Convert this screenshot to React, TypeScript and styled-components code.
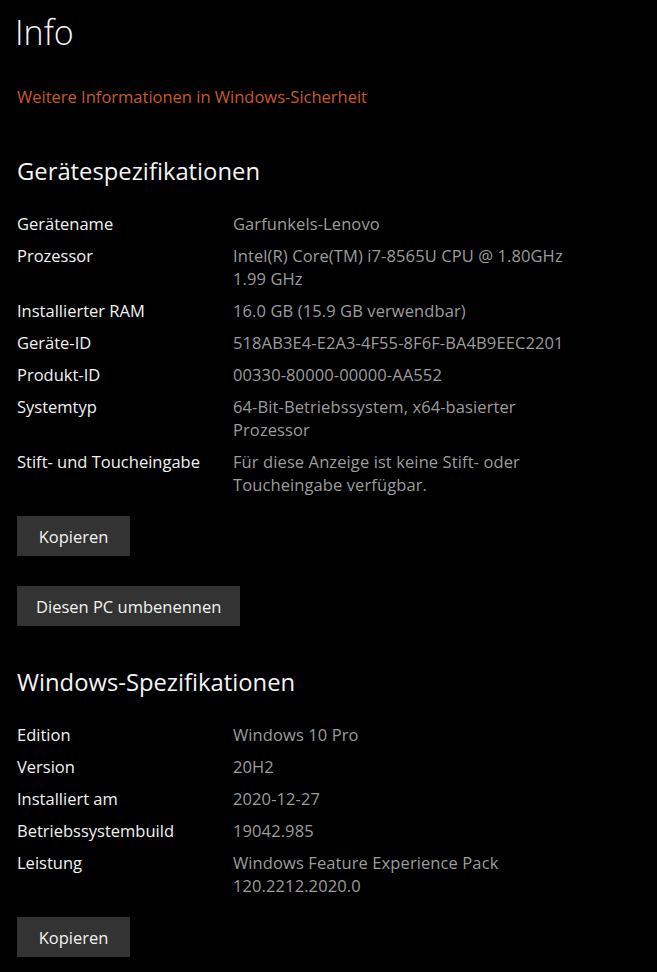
import * as React from 'react'
import styled, { createGlobalStyle } from 'styled-components'

const GlobalStyle = createGlobalStyle`
  html, body {
    margin: 0;
    padding: 0;
    background: #000;
  }
  body {
    font-family: "Open Sans", "Noto Sans", "Liberation Sans", sans-serif;
    -webkit-font-smoothing: antialiased;
  }
`

type Spec = { label: string; value: string[] }

const deviceSpecs: Spec[] = [
    { label: 'Gerätename', value: ['Garfunkels-Lenovo'] },
    { label: 'Prozessor', value: ['Intel(R) Core(TM) i7-8565U CPU @ 1.80GHz', '1.99 GHz'] },
    { label: 'Installierter RAM', value: ['16.0 GB (15.9 GB verwendbar)'] },
    { label: 'Geräte-ID', value: ['518AB3E4-E2A3-4F55-8F6F-BA4B9EEC2201'] },
    { label: 'Produkt-ID', value: ['00330-80000-00000-AA552'] },
    { label: 'Systemtyp', value: ['64-Bit-Betriebssystem, x64-basierter', 'Prozessor'] },
    { label: 'Stift- und Toucheingabe', value: ['Für diese Anzeige ist keine Stift- oder', 'Toucheingabe verfügbar.'] },
]

const windowsSpecs: Spec[] = [
    { label: 'Edition', value: ['Windows 10 Pro'] },
    { label: 'Version', value: ['20H2'] },
    { label: 'Installiert am', value: ['2020-12-27'] },
    { label: 'Betriebssystembuild', value: ['19042.985'] },
    { label: 'Leistung', value: ['Windows Feature Experience Pack', '120.2212.2020.0'] },
]

function SpecTable({ specs }: { specs: Spec[] }) {
    return (
        <Table>
            {specs.map((s) => (
                <Row key={s.label}>
                    <Label>{s.label}</Label>
                    <Value>
                        {s.value.map((line) => (
                            <div key={line}>{line}</div>
                        ))}
                    </Value>
                </Row>
            ))}
        </Table>
    )
}

export default function App() {
    return (
        <Page>
            <GlobalStyle />
            <Title>Info</Title>
            <Link href="#">Weitere Informationen in Windows-Sicherheit</Link>

            <Heading $gap={48}>Gerätespezifikationen</Heading>
            <SpecTable specs={deviceSpecs} />
            <Actions>
                <ActionButton>Kopieren</ActionButton>
                <ActionButton>Diesen PC umbenennen</ActionButton>
            </Actions>

            <Heading $gap={41}>Windows-Spezifikationen</Heading>
            <SpecTable specs={windowsSpecs} />
            <Actions>
                <ActionButton>Kopieren</ActionButton>
            </Actions>
        </Page>
    )
}

const Page = styled.div`
    width: 657px;
    min-height: 972px;
    box-sizing: border-box;
    padding: 10px 0 0 17px;
    background: #000;
    display: flex;
    flex-direction: column;
    align-items: flex-start;
`

const Title = styled.h1`
    margin: 0 0 0 -2px;
    font-size: 34px;
    font-weight: 300;
    line-height: 44px;
    color: #f4f4f4;
`

const Link = styled.a`
    margin-top: 32px;
    font-size: 16.5px;
    line-height: 22px;
    color: #cb5a26;
    text-decoration: none;
`

const Heading = styled.h2<{ $gap: number }>`
    margin: ${(p) => p.$gap}px 0 0;
    font-size: 23.8px;
    font-weight: 400;
    line-height: 30px;
    color: #f4f4f4;
`

const Table = styled.div`
    margin-top: 26px;
    display: flex;
    flex-direction: column;
    gap: 9px;
`

const Row = styled.div`
    display: grid;
    grid-template-columns: 216px 350px;
    font-size: 16.5px;
    line-height: 23px;
`

const Label = styled.div`
    color: #f2f2f2;
`

const Value = styled.div`
    color: #9c9c9c;
    white-space: nowrap;
    letter-spacing: 0.1px;
`

const Actions = styled.div`
    margin-top: 20px;
    display: flex;
    flex-direction: column;
    align-items: flex-start;
    gap: 30px;
`

const ActionButton = styled.button`
    min-width: 113px;
    height: 40px;
    padding: 0 19px;
    border: none;
    background: #333;
    color: #f2f2f2;
    font-family: inherit;
    font-size: 16.5px;
    cursor: pointer;
`
